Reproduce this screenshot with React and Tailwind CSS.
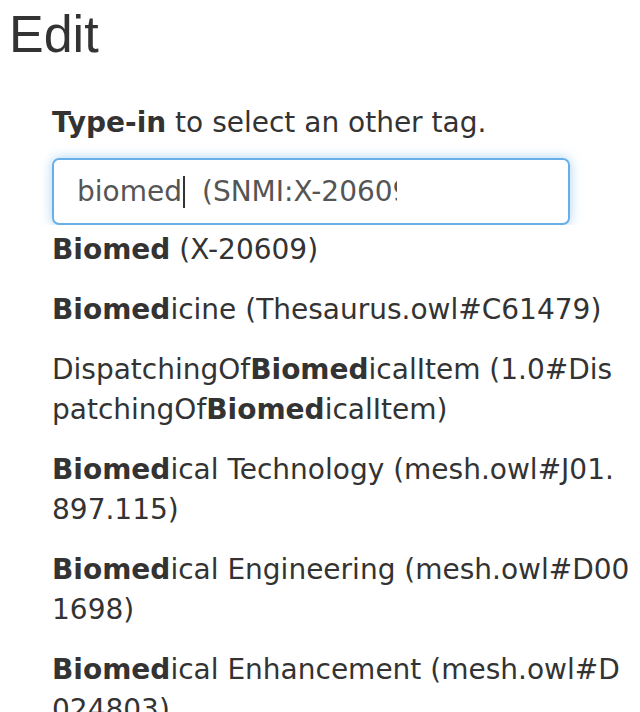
const items = [
  { pre: '', hit: 'Biomed', post: '', id: 'X-20609' },
  { pre: '', hit: 'Biomed', post: 'icine', id: 'Thesaurus.owl#C61479' },
  { pre: 'DispatchingOf', hit: 'Biomed', post: 'icalItem', id: '1.0#DispatchingOf', tail: 'icalItem', narrow: true },
  { pre: '', hit: 'Biomed', post: 'ical Technology', id: 'mesh.owl#J01.897.115' },
  { pre: '', hit: 'Biomed', post: 'ical Engineering', id: 'mesh.owl#D001698' },
  { pre: '', hit: 'Biomed', post: 'ical Enhancement', id: 'mesh.owl#D024803' },
];

const body = { fontFamily: '"DejaVu Sans", Verdana, sans-serif' };

function Item({ it }) {
  return (
    <li className={`mb-[20px] leading-[40px] break-all ${it.narrow ? 'mr-[2px]' : ''}`}>
      {it.pre}
      <b>{it.hit}</b>
      {it.post} ({it.id}
      {it.tail && (
        <>
          <b>Biomed</b>
          {it.tail}
        </>
      )}
      )
    </li>
  );
}

export default function App() {
  return (
    <div className="h-[712px] overflow-hidden bg-white text-[#333]">
      <h1 className="pl-[9px] pt-[4px] text-[52px] leading-[60px] font-normal" style={{ fontFamily: '"Liberation Sans", Arial, sans-serif' }}>
        Edit
      </h1>
      <div className="pl-[52px] pr-[10px] text-[28px]" style={body}>
        <p className="mt-[41px] leading-[36px]">
          <b>Type-in</b> to select an other tag.
        </p>
        <div className="mt-[17px] w-[518px] h-[67px] rounded-[7px] border-2 border-[#66afe9] shadow-[0_0_12px_rgba(102,175,233,0.55)] flex items-center pl-[23px] text-[#555]">
          <span>biomed</span>
          <span className="inline-block w-[2px] h-[32px] bg-[#333] ml-[1px]"></span>
          <span className="ml-[17px] w-[195px] overflow-hidden whitespace-nowrap">(SNMI:X-20609)</span>
        </div>
        <ul className="relative z-10 -ml-[52px] pl-[52px] pt-[5px] bg-white w-[640px] pr-[10px]">
          {items.map((it, i) => (
            <Item key={i} it={it} />
          ))}
        </ul>
      </div>
    </div>
  );
}
